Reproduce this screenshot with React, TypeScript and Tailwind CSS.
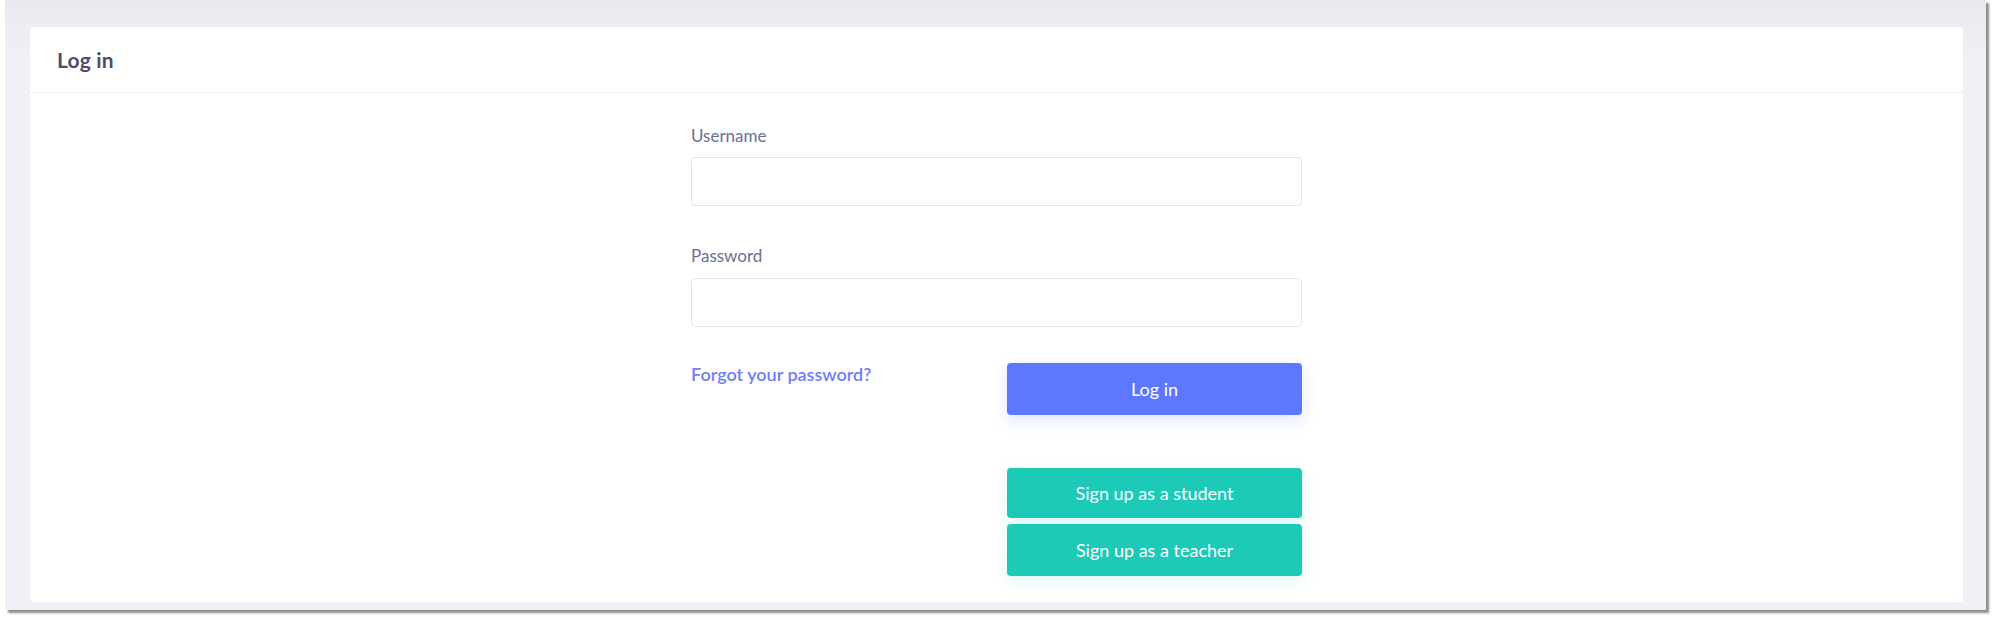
import React from 'react';

const font = { fontFamily: 'Lato, "Open Sans", sans-serif' };

export default function App() {
  return (
    <div className="w-full h-[625px] bg-white" style={font}>
      {/* window frame */}
      <div className="ml-[5px] w-[1981px] h-[610px] bg-gradient-to-b from-[#e9eaf0] to-[#f0f1f7] to-[60px] shadow-[3px_3px_2px_rgba(0,0,0,0.45)] pt-[27px] pl-[25px]">
        <div className="w-[1933px] h-[575px] bg-white rounded-[4px] flex flex-col">
          {/* header */}
          <div className="h-[66px] border-b border-[#ebedf2] flex items-center px-[27px]">
            <h3 className="text-[21px] font-bold text-[#4f4d63] tracking-[0.2px]">Log in</h3>
          </div>

          {/* body */}
          <div className="flex-1 pt-[31px]">
            <form className="w-[611px] mx-auto" onSubmit={(e) => e.preventDefault()}>
              <label className="block text-[17px] leading-[24px] text-[#6a6f98] mb-[9px]">Username</label>
              <input
                type="text"
                className="block w-full h-[49px] border border-[#e2e5ec] rounded-[4px] px-4 outline-none"
              />

              <label className="block text-[17px] leading-[24px] text-[#6a6f98] mt-[38px] mb-[10px]">Password</label>
              <input
                type="password"
                className="block w-full h-[49px] border border-[#e2e5ec] rounded-[4px] px-4 outline-none"
              />

              <div className="flex justify-between items-start mt-[36px]">
                <a href="#" className="text-[18px] leading-[24px] font-semibold text-[#727cfa] -mt-[1px]">
                  Forgot your password?
                </a>
                <button
                  type="submit"
                  className="w-[295px] h-[52px] rounded-[4px] bg-[#5d78ff] text-white text-[18px] shadow-[0_5px_16px_rgba(93,120,255,0.2)]"
                >
                  Log in
                </button>
              </div>

              <div className="flex flex-col items-end gap-[6px] mt-[53px]">
                <button
                  type="button"
                  className="w-[295px] h-[50px] rounded-[4px] bg-[#1dc9b7] text-white text-[18px] shadow-[0_5px_16px_rgba(29,201,183,0.15)]"
                >
                  Sign up as a student
                </button>
                <button
                  type="button"
                  className="w-[295px] h-[52px] rounded-[4px] bg-[#1dc9b7] text-white text-[18px] shadow-[0_5px_16px_rgba(29,201,183,0.15)]"
                >
                  Sign up as a teacher
                </button>
              </div>
            </form>
          </div>
        </div>
      </div>
    </div>
  );
}
